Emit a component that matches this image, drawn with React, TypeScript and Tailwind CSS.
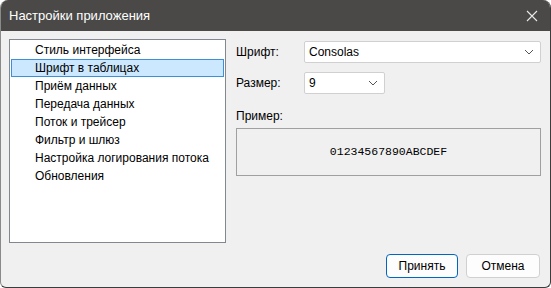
import React from "react";

const items = [
  "Стиль интерфейса",
  "Шрифт в таблицах",
  "Приём данных",
  "Передача данных",
  "Поток и трейсер",
  "Фильтр и шлюз",
  "Настройка логирования потока",
  "Обновления",
];

function Chevron() {
  return (
    <svg width="10" height="6" viewBox="0 0 10 6" className="shrink-0">
      <path d="M1 1 L5 5 L9 1" fill="none" stroke="#555" strokeWidth="1" />
    </svg>
  );
}

export default function App() {
  return (
    <div
      className="w-[551px] h-[288px] bg-white overflow-hidden"
      style={{ fontFamily: '"Liberation Sans", "Noto Sans", sans-serif' }}
    >
      <div className="w-[551px] h-[288px] rounded-t-[8px] rounded-b-[6px] overflow-hidden flex flex-col bg-[#f0f0f0] border-l border-r border-b border-l-[#8a8a8a] border-r-[#3c3c3c] border-b-[#3c3c3c]">
        <div className="h-[31px] bg-[#4a4947] flex items-center justify-between pl-[8px] pr-[12px] shrink-0">
          <span className="text-[13px] text-white">Настройки приложения</span>
          <svg width="12" height="12" viewBox="0 0 12 12">
            <path d="M1 1 L11 11 M11 1 L1 11" stroke="#e8e8e8" strokeWidth="1.1" />
          </svg>
        </div>
        <div className="flex pl-[8px] pt-[8px] flex-1">
          <div className="w-[217px] h-[204px] bg-white border border-[#828790] p-[1px] flex flex-col">
            {items.map((t, i) => (
              <div
                key={t}
                className={
                  "h-[18px] flex items-center pl-[23px] text-[12px] text-black border " +
                  (i === 1 ? "bg-[#cce8ff] border-[#3d8fd6]" : "border-transparent")
                }
              >
                {t}
              </div>
            ))}
          </div>
          <div className="flex flex-col ml-[10px] w-[305px] pt-[2px]">
            <div className="flex items-center h-[22px]">
              <span className="w-[68px] text-[12px] text-black">Шрифт:</span>
              <div className="w-[237px] h-[22px] bg-white border border-[#d0d0d0] rounded-[2px] flex items-center justify-between pl-[4px] pr-[6px]">
                <span className="text-[12px] text-black">Consolas</span>
                <Chevron />
              </div>
            </div>
            <div className="flex items-center h-[22px] mt-[9px]">
              <span className="w-[68px] text-[12px] text-black">Размер:</span>
              <div className="w-[81px] h-[22px] bg-white border border-[#d0d0d0] rounded-[2px] flex items-center justify-between pl-[4px] pr-[6px]">
                <span className="text-[12px] text-black">9</span>
                <Chevron />
              </div>
            </div>
            <span className="text-[12px] text-black mt-[14px] leading-[16px]">Пример:</span>
            <div className="mt-[4px] w-[305px] h-[48px] border border-[#a0a0a0] flex items-center justify-center">
              <span
                className="text-[11.5px] text-black"
                style={{ fontFamily: '"Liberation Mono", "DejaVu Sans Mono", monospace' }}
              >
                01234567890ABCDEF
              </span>
            </div>
          </div>
        </div>
        <div className="flex justify-end gap-[8px] pr-[10px] pb-[9px] shrink-0">
          <button className="w-[72px] h-[24px] bg-[#fdfdfd] border border-[#0067c0] rounded-[4px] text-[12px] text-black">
            Принять
          </button>
          <button className="w-[74px] h-[24px] bg-[#fdfdfd] border border-[#d0d0d0] rounded-[4px] text-[12px] text-black">
            Отмена
          </button>
        </div>
      </div>
    </div>
  );
}
